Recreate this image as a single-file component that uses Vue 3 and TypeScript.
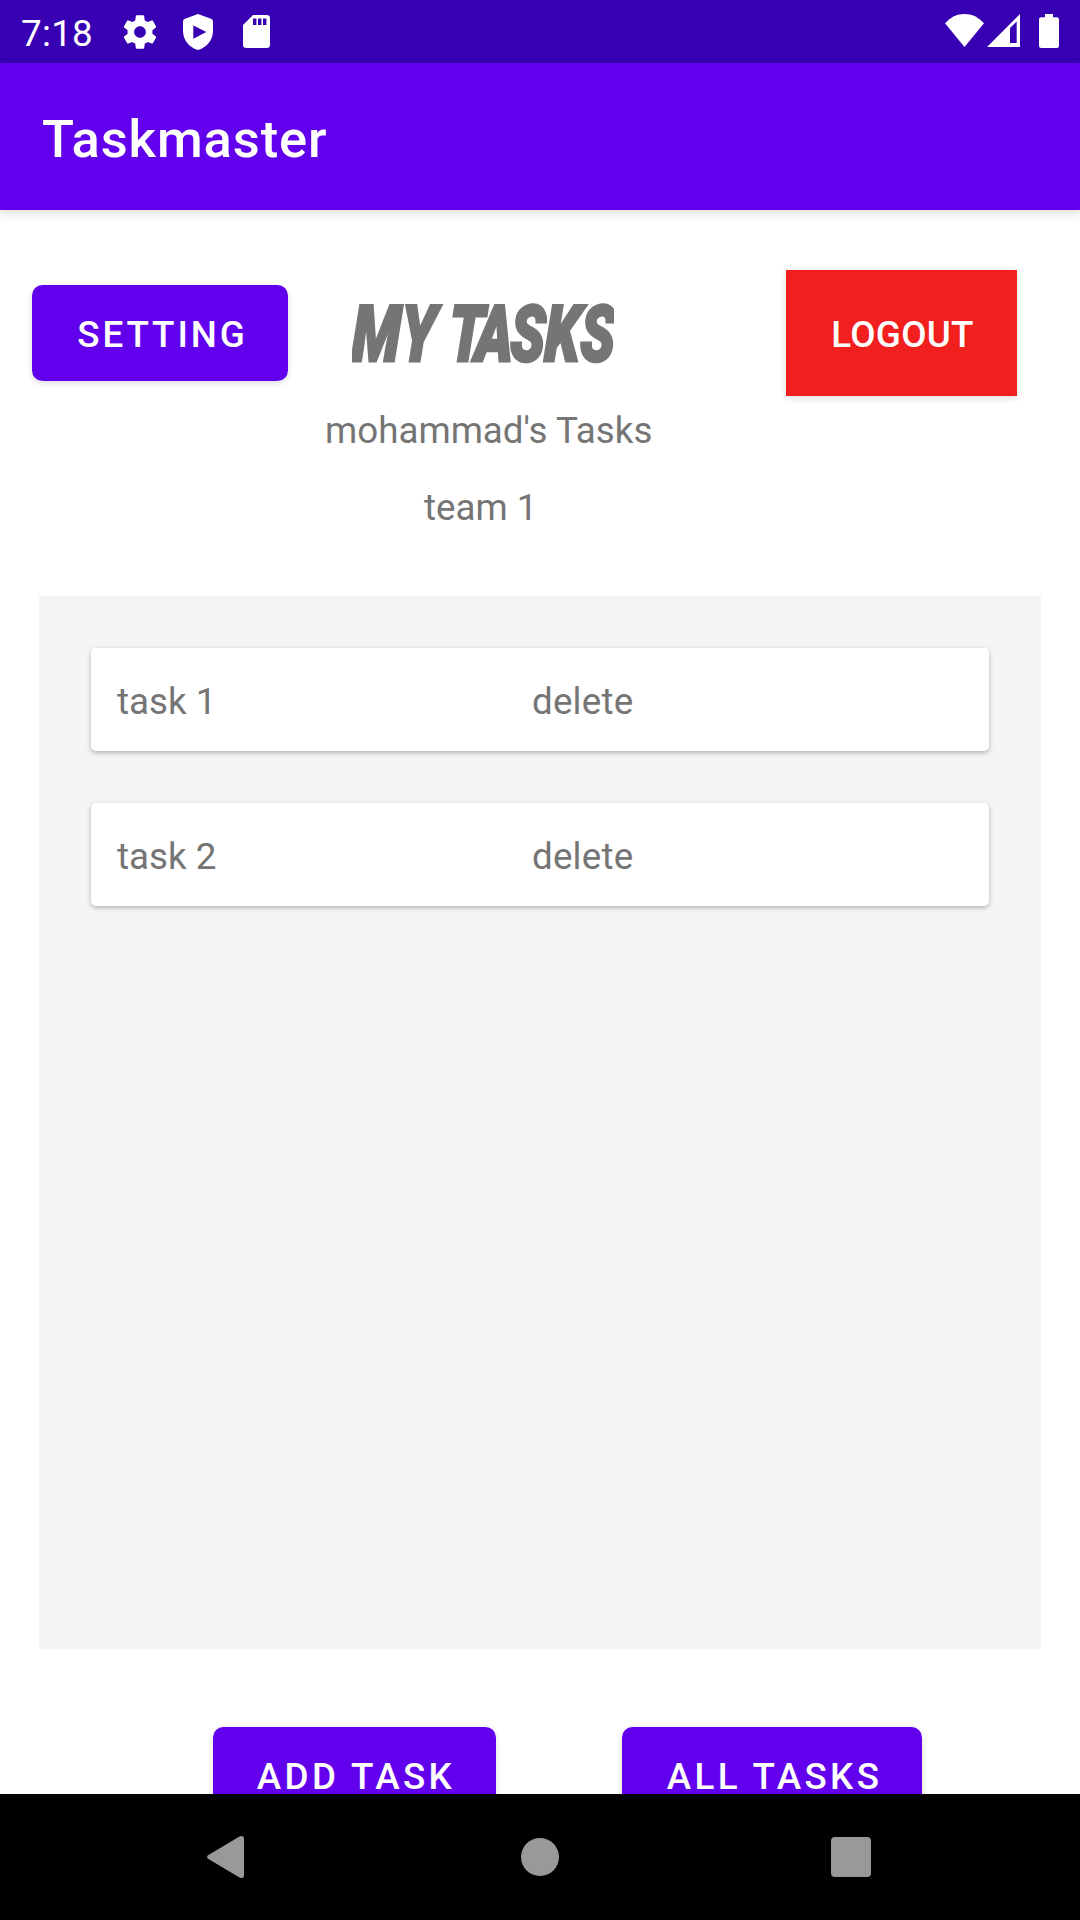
<script setup lang="ts">
interface Task {
  id: number
  title: string
}

const user = 'mohammad'
const team = 'team 1'
const tasks: Task[] = [
  { id: 1, title: 'task 1' },
  { id: 2, title: 'task 2' },
]
</script>

<template>
  <div class="screen">
    <div class="status-bar">
      <span class="clock">7:18</span>
      <svg class="gear" width="40" height="40" viewBox="0 0 24 24">
        <path
          fill="#fff"
          d="M19.43 12.98c.04-.32.07-.64.07-.98s-.03-.66-.07-.98l2.11-1.65c.19-.15.24-.42.12-.64l-2-3.46c-.12-.22-.39-.3-.61-.22l-2.49 1c-.52-.4-1.08-.73-1.69-.98l-.38-2.65C14.46 2.18 14.25 2 14 2h-4c-.25 0-.46.18-.49.42l-.38 2.65c-.61.25-1.17.59-1.69.98l-2.49-1c-.23-.09-.49 0-.61.22l-2 3.46c-.13.22-.07.49.12.64l2.11 1.65c-.04.32-.07.65-.07.98s.03.66.07.98l-2.11 1.65c-.19.15-.24.42-.12.64l2 3.46c.12.22.39.3.61.22l2.49-1c.52.4 1.08.73 1.69.98l.38 2.65c.03.24.24.42.49.42h4c.25 0 .46-.18.49-.42l.38-2.65c.61-.25 1.17-.59 1.69-.98l2.49 1c.23.09.49 0 .61-.22l2-3.46c.12-.22.07-.49-.12-.64l-2.11-1.65zM12 15.5c-1.93 0-3.5-1.57-3.5-3.5s1.57-3.5 3.5-3.5 3.5 1.57 3.5 3.5-1.57 3.5-3.5 3.5z"
        />
      </svg>
      <svg class="shield" width="30" height="36" viewBox="0 0 30 36">
        <path
          fill="#fff"
          fill-rule="evenodd"
          d="M15 0 L28 4.8 Q30 5.6 30 7.5 V17 C30 26 23.5 33.8 15 36 C6.5 33.8 0 26 0 17 V7.5 Q0 5.6 2 4.8 Z M10.3 11.4 V24.8 L23.3 18.1 Z"
        />
      </svg>
      <svg class="sd" width="27" height="33" viewBox="0 0 27 33">
        <path
          fill="#fff"
          fill-rule="evenodd"
          d="M10 0 H23.8 Q27 0 27 3.2 V29.8 Q27 33 23.8 33 H3.2 Q0 33 0 29.8 V10 Z M10 3.6 V10 H13.4 V3.6 Z M15 3.6 V10 H18.4 V3.6 Z M20 3.6 V10 H23.4 V3.6 Z"
        />
      </svg>
      <span class="spacer"></span>
      <svg class="wifi" width="39" height="33" viewBox="0 0 39 33">
        <path fill="#fff" d="M19.5 33 L0 9.3 C5.5 3.2 12 0 19.5 0 S33.5 3.2 39 9.3 Z" />
      </svg>
      <svg class="signal" width="33" height="33" viewBox="0 0 33 33">
        <path fill="#fff" fill-rule="evenodd" d="M0 33 L33 0 V33 Z M23 14 V29 H29.7 V7.6 Z" />
      </svg>
      <svg class="battery" width="20" height="34" viewBox="0 0 20 34">
        <path
          fill="#fff"
          d="M6 0 H14 V3.3 H17.8 Q20 3.3 20 5.5 V31.8 Q20 34 17.8 34 H2.2 Q0 34 0 31.8 V5.5 Q0 3.3 2.2 3.3 H6 Z"
        />
      </svg>
    </div>

    <header class="app-bar">
      <h1>Taskmaster</h1>
    </header>

    <main class="content">
      <section class="top">
        <button class="btn setting">SETTING</button>
        <div class="heading">
          <svg class="my-tasks" width="262" height="64" viewBox="0 0 262 64">
            <text transform="translate(0 59.5) skewX(-2) scale(0.73 1)" x="-1 66 110 132 168 216 263 312">MY TASKS</text>
          </svg>
          <p class="owner">{{ user }}'s Tasks</p>
          <p class="team">{{ team }}</p>
        </div>
        <button class="logout">LOGOUT</button>
      </section>

      <section class="list">
        <article v-for="task in tasks" :key="task.id" class="card">
          <span class="title">{{ task.title }}</span>
          <span class="delete">delete</span>
        </article>
      </section>

      <section class="actions">
        <button class="btn add">ADD TASK</button>
        <button class="btn all">ALL TASKS</button>
      </section>
    </main>

    <nav class="nav-bar">
      <svg class="back" width="38" height="42" viewBox="0 0 38 42">
        <path
          fill="#999"
          d="M1 19.2 L32.5 .6 Q37 -1.2 37 3 V39 Q37 43.2 32.5 41.4 L1 22.8 Q-.8 21 1 19.2 Z"
        />
      </svg>
      <span class="home"></span>
      <span class="recents"></span>
    </nav>
  </div>
</template>

<style>
body {
  margin: 0;
  background: #fff;
}
</style>

<style scoped>
.screen {
  width: 1080px;
  height: 1920px;
  display: flex;
  flex-direction: column;
  overflow: hidden;
  background: #fff;
  font-family: Roboto, 'Liberation Sans', sans-serif;
  font-size: 36.75px;
  color: #757575;
}

.status-bar {
  flex: none;
  height: 63px;
  display: flex;
  align-items: flex-start;
  background: #3700b3;
  color: #fff;
}
.status-bar svg {
  flex: none;
}
.clock {
  width: 99px;
  padding-left: 21px;
  line-height: 43px;
  margin-top: 12px;
  letter-spacing: 0.3px;
}
.gear {
  margin-top: 11.5px;
}
.shield {
  margin: 13.5px 0 0 23px;
}
.sd {
  margin: 15px 0 0 29.5px;
}
.spacer {
  flex: 1;
}
.wifi {
  margin-top: 14px;
}
.signal {
  margin: 14px 0 0 3px;
}
.battery {
  margin: 14px 21px 0 19px;
}

.app-bar {
  flex: none;
  height: 147px;
  display: flex;
  align-items: center;
  padding-left: 42px;
  background: #6200ee;
  color: #fff;
  box-shadow: 0 3px 10px rgba(0, 0, 0, 0.14);
  z-index: 1;
}
h1 {
  margin: 4px 0 0;
  font-size: 52.5px;
  font-weight: 500;
  letter-spacing: 0.9px;
}

.content {
  flex: none;
  height: 1584px;
  display: flex;
  flex-direction: column;
  overflow: hidden;
}
.top {
  flex: none;
  height: 326px;
  padding-top: 60px;
  display: flex;
  align-items: flex-start;
}
button {
  flex: none;
  border: 0;
  padding: 5px 0 0;
  font: 500 36.75px/1 Roboto, 'Liberation Sans', sans-serif;
  color: #fff;
}
.btn {
  height: 96px;
  padding-left: 3px;
  border-radius: 10.5px;
  background: #6200ee;
  letter-spacing: 3.4px;
  box-shadow: 0 2px 6px rgba(0, 0, 0, 0.14);
}
.setting {
  width: 256px;
  margin: 15px 0 0 32px;
  padding-left: 5px;
  letter-spacing: 2.9px;
}
.heading {
  width: 498px;
}
.my-tasks {
  display: block;
  overflow: hidden;
  margin: 31px 0 0 64px;
}
.my-tasks text {
  font-family: Roboto, sans-serif;
  font-size: 78px;
  font-weight: 900;
  font-style: italic;
  fill: #757575;
  stroke: #757575;
  stroke-width: 3px;
}
p {
  margin: 0;
  line-height: 44px;
}
.owner {
  margin: 44px 0 0 37px;
}
.team {
  margin: 33px 0 0 136px;
}
.logout {
  width: 231px;
  height: 126px;
  padding-left: 2px;
  background: #f21f1f;
  letter-spacing: 0.3px;
  box-shadow: 0 2px 7px rgba(0, 0, 0, 0.14);
}

.list {
  flex: none;
  box-sizing: border-box;
  width: 1002px;
  height: 1053px;
  margin-left: 39px;
  padding: 52px;
  display: flex;
  flex-direction: column;
  gap: 52px;
  background: #f5f5f5;
}
.card {
  box-sizing: border-box;
  height: 103px;
  padding: 3px 26px 0;
  display: flex;
  align-items: center;
  border-radius: 5px;
  background: #fff;
  box-shadow: 0 2px 5px rgba(0, 0, 0, 0.27);
}
.title {
  width: 415px;
}
.delete {
  letter-spacing: 0.2px;
}

.actions {
  display: flex;
  align-items: flex-start;
  padding: 78px 0 0 213px;
  gap: 126px;
}
.add {
  width: 283px;
}
.all {
  width: 300px;
  padding-left: 5px;
}

.nav-bar {
  flex: none;
  height: 126px;
  display: flex;
  align-items: center;
  background: #000;
  z-index: 1;
}
.back {
  margin-left: 207px;
}
.home {
  width: 38px;
  height: 38px;
  margin-left: 276px;
  border-radius: 50%;
  background: #999;
}
.recents {
  width: 40px;
  height: 40px;
  margin-left: 272px;
  border-radius: 4px;
  background: #999;
}
</style>
